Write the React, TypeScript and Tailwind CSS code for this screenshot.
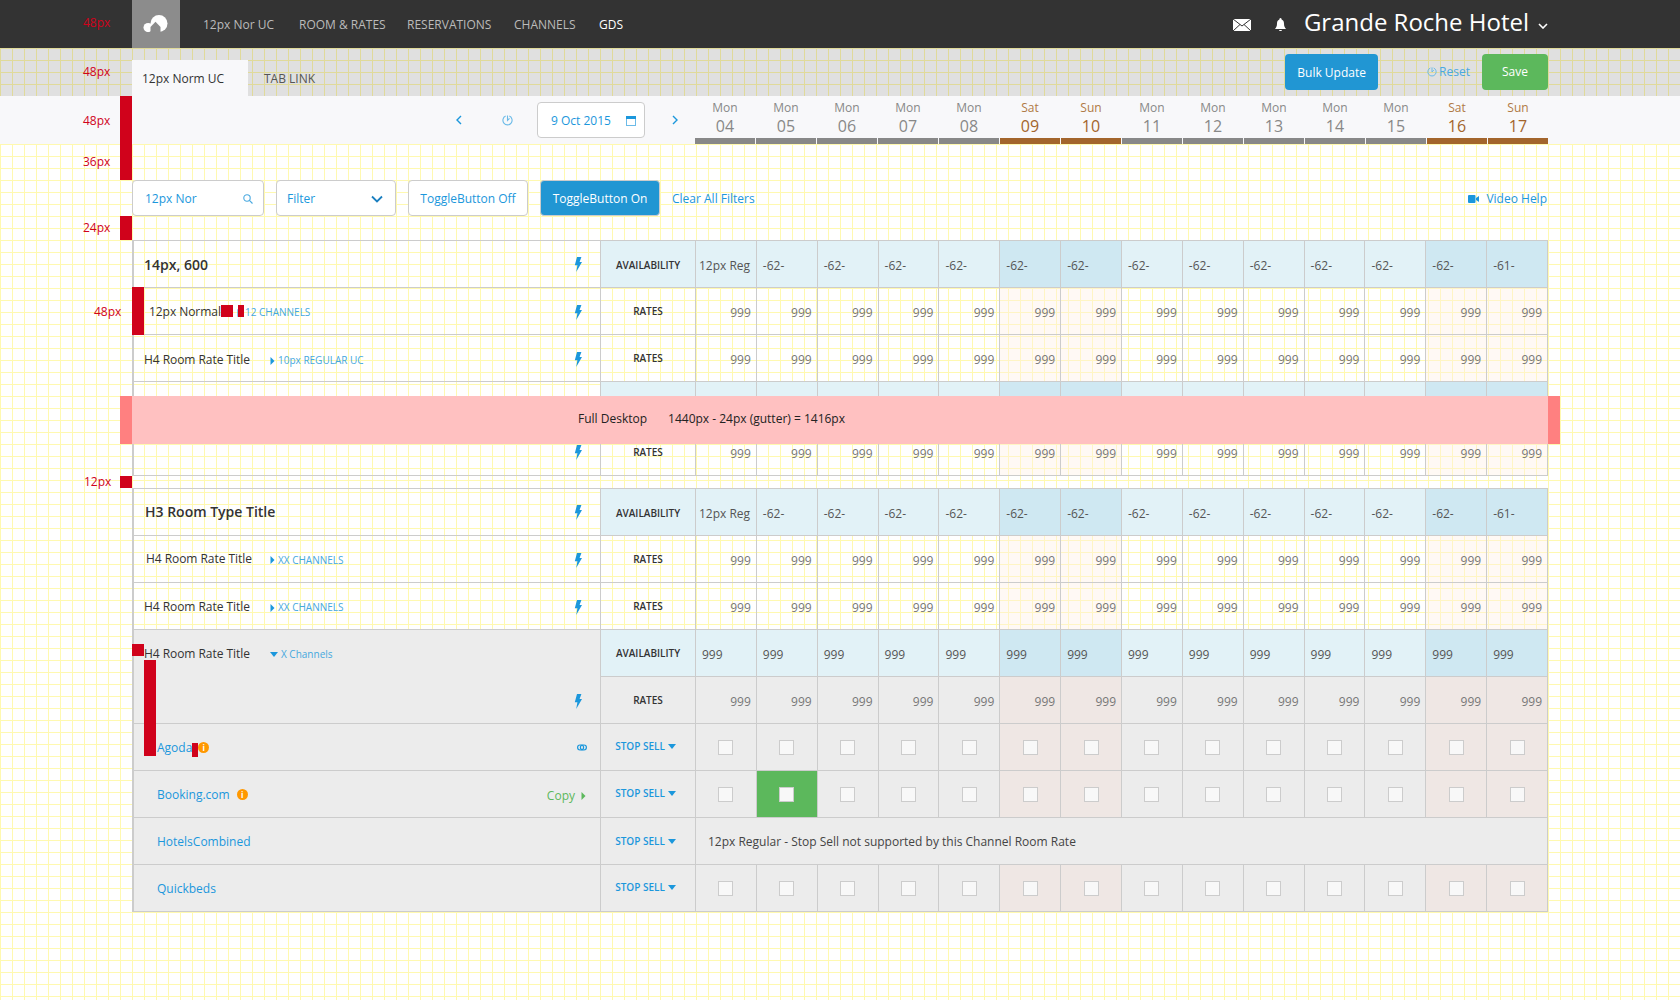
import React from 'react';

const DAYS = [
    ['Mon', '04'], ['Mon', '05'], ['Mon', '06'], ['Mon', '07'], ['Mon', '08'], ['Sat', '09'], ['Sun', '10'],
    ['Mon', '11'], ['Mon', '12'], ['Mon', '13'], ['Mon', '14'], ['Mon', '15'], ['Sat', '16'], ['Sun', '17'],
];
const isWeekend = (i: number) => i === 5 || i === 6 || i === 12 || i === 13;
const ROW = 'grid grid-cols-[467px_95px_repeat(14,minmax(0,1fr))] h-[47px]';
const CELL = 'border-t border-l border-[#ccc] flex items-center min-w-0';

function Bolt({ className = 'mt-[3px]' }: { className?: string }) {
    return (
        <svg width="8" height="15" viewBox="0 0 8 15" className={`shrink-0 ${className}`}>
            <path d="M3 0 L7.4 0 L5.6 5 L8 5 L2.2 15 L3.4 8.2 L0.8 8.2 Z" fill="#1b97dc" />
        </svg>
    );
}

function CaretRight({ color = '#1b97dc' }: { color?: string }) {
    return (
        <svg width="5" height="8" viewBox="0 0 4 8" className="shrink-0">
            <path d="M0 0 L4 4 L0 8 Z" fill={color} />
        </svg>
    );
}

function CaretDown({ w = 8, h = 5 }: { w?: number; h?: number }) {
    return (
        <svg width={w} height={h} viewBox="0 0 8 5" className="shrink-0">
            <path d="M0 0 L8 0 L4 5 Z" fill="#1b97dc" />
        </svg>
    );
}

function Info() {
    return (
        <span className="w-[11px] h-[11px] rounded-full bg-[#ff9800] text-white text-[8px] leading-[11px] text-center font-bold shrink-0">
            i
        </span>
    );
}

function Clock({ size = 11 }: { size?: number }) {
    return (
        <svg width={size} height={size} viewBox="0 0 12 12" fill="none" stroke="#6cbbe8" strokeWidth="1.2" className="shrink-0">
            <path d="M4 1.2 A5 5 0 1 0 8 1.2" />
            <path d="M6 0.5 L6 6 L8.2 3.8" />
        </svg>
    );
}

function AvailabilityRow({ title, values, left, label = 'AVAILABILITY' }: { title?: React.ReactNode; values: string[]; left?: boolean; label?: string }) {
    return (
        <div className={ROW}>
            <div className={`${CELL} justify-between pl-[10px] pr-[18px] ${left ? 'bg-[#ececec]' : ''}`}>{title}</div>
            <div className={`${CELL} justify-center ${left ? 'pt-px' : 'pt-[2px]'} bg-[#e2f2f7] text-[10px] font-semibold text-[#333]`}>
                {label}
            </div>
            {values.map((v, i) => (
                <div
                    key={i}
                    className={`${CELL} ${v === '12px Reg' ? 'pl-[3px]' : 'pl-[6px]'} pt-[3px] whitespace-nowrap text-[12px] text-[#555] ${
                        isWeekend(i) ? 'bg-[#cfe8f2]' : 'bg-[#e2f2f7]'
                    }`}
                >
                    {v}
                </div>
            ))}
        </div>
    );
}

function RatesRow({ title, grey, noTop }: { title?: React.ReactNode; grey?: boolean; noTop?: boolean }) {
    return (
        <div className={ROW}>
            <div
                className={`${CELL} justify-between pl-[10px] pr-[18px] ${noTop ? 'border-t-0' : ''} ${grey ? 'bg-[#ececec]' : ''}`}
            >
                {title}
            </div>
            <div className={`${CELL} justify-center text-[10px] font-semibold text-[#333] ${grey ? 'bg-[#ececec]' : ''}`}>RATES</div>
            {DAYS.map((_, i) => (
                <div
                    key={i}
                    className={`${CELL} justify-end pr-[5px] pt-[3px] text-[12px] text-[#777] ${
                        grey ? (isWeekend(i) ? 'bg-[#efe7e4]' : 'bg-[#ececec]') : isWeekend(i) ? 'bg-[#fff0e6]/40' : ''
                    }`}
                >
                    999
                </div>
            ))}
        </div>
    );
}

function Title({ text, children, className = '' }: { text: string; children?: React.ReactNode; className?: string }) {
    return (
        <div className={`flex items-center ${className}`}>
            <span className="text-[12px] tracking-[-0.05px] text-[#333] w-[126px] shrink-0">{text}</span>
            {children}
        </div>
    );
}

function Channels({ text, down }: { text: string; down?: boolean }) {
    return (
        <span className="flex items-center gap-[3px] text-[10px] text-[#45a8de] pt-[2px]">
            {down ? <CaretDown w={8} h={5} /> : <CaretRight />}
            {text}
        </span>
    );
}

function ChannelRow({
    name,
    right,
    info,
    infoGap,
    selected,
    message,
}: {
    name: string;
    right?: React.ReactNode;
    info?: boolean;
    infoGap?: string;
    selected?: number;
    message?: string;
}) {
    return (
        <div className={ROW}>
            <div className={`${CELL} justify-between pl-[23px] pr-[14px] bg-[#ececec]`}>
                <span className="flex items-center pt-px text-[12px] text-[#1b97dc]">
                    {name}
                    {info && <span className={`flex ${infoGap}`}><Info /></span>}
                </span>
                {right}
            </div>
            <div
                className={`${CELL} justify-center gap-[3px] pr-[5px] ${
                    message ? 'pt-px' : 'pb-[2px]'
                } bg-[#ececec] text-[10px] font-semibold text-[#1b97dc]`}
            >
                STOP SELL
                <CaretDown />
            </div>
            {message ? (
                <div className={`${CELL} col-span-14 pl-3 pt-[2px] bg-[#ececec] text-[12px] text-[#444]`}>{message}</div>
            ) : (
                DAYS.map((_, i) => (
                    <div
                        key={i}
                        className={`${CELL} justify-center ${
                            selected === i ? 'bg-[#5cb85c]' : isWeekend(i) ? 'bg-[#efe7e4]' : 'bg-[#ececec]'
                        }`}
                    >
                        <span className="w-[15px] h-[15px] bg-[#f8f8f8] border border-[#ccc]" />
                    </div>
                ))
            )}
        </div>
    );
}

function Marker({ className }: { className: string }) {
    return <div className={`absolute bg-[#d0021b] ${className}`} />;
}

function Note({ text, className }: { text: string; className: string }) {
    return <div className={`absolute text-[12px] leading-4 text-[#d0021b] ${className}`}>{text}</div>;
}

const NEGS = ['12px Reg', '-62-', '-62-', '-62-', '-62-', '-62-', '-62-', '-62-', '-62-', '-62-', '-62-', '-62-', '-62-', '-61-'];
const BLANKS = DAYS.map(() => '');

export default function App() {
    return (
        <div className="relative h-[1000px] overflow-hidden bg-white bg-[linear-gradient(to_right,#fff9b0_1px,transparent_1px),linear-gradient(to_bottom,#fff9b0_1px,transparent_1px)] bg-size-[12px_12px] font-['Open_Sans',sans-serif]">
            {/* top bar */}
            <header className="h-12 bg-[#333] flex items-center pl-[132px] pr-[132px]">
                <a className="w-12 h-12 bg-[#8c8c8c] flex items-center justify-center pr-px">
                    <svg width="25" height="18" viewBox="0 0 24 18">
                        <circle cx="4.6" cy="12.6" r="4.6" fill="#fff" />
                        <circle cx="15.5" cy="8.6" r="8.5" fill="#fff" />
                        <path d="M7 18 L7 12 L12 6.8 L17 12 L17 18 Z" fill="#8c8c8c" />
                        <rect x="0" y="17.2" width="24" height="1" fill="#8c8c8c" />
                    </svg>
                </a>
                <nav className="flex items-center pt-px text-[12px] text-[#bbb] ml-[23px]">
                    <a className="w-[96px]">12px Nor UC</a>
                    <a className="w-[108px]">ROOM &amp; RATES</a>
                    <a className="w-[107px]">RESERVATIONS</a>
                    <a className="w-[85px]">CHANNELS</a>
                    <a className="text-white">GDS</a>
                </nav>
                <div className="ml-auto flex items-center">
                    <svg width="18" height="12" viewBox="0 0 18 12" className="mt-[2px] -mr-[2px] -translate-x-[2px]">
                        <rect width="18" height="12" fill="#fff" />
                        <path d="M0 0 L9 7 L18 0 M0 12 L7 5.5 M18 12 L11 5.5" stroke="#333" strokeWidth="1" fill="none" />
                    </svg>
                    <svg width="11" height="14" viewBox="0 0 11 14" className="ml-[24px] mt-[2px]">
                        <path d="M5.5 0 C6.4 0 6.6 .8 6.6 1.4 C8.4 2 9 3.6 9 5.6 C9 8 9.6 9.6 11 11 L0 11 C1.4 9.6 2 8 2 5.6 C2 3.6 2.6 2 4.4 1.4 C4.4 .8 4.6 0 5.5 0 Z M4 12 L7 12 C7 13.4 4 13.4 4 12 Z" fill="#fff" />
                    </svg>
                    <span className="ml-[18px] -mt-[4px] text-[24px] leading-8 text-white">Grande Roche Hotel</span>
                    <svg width="10" height="6" viewBox="0 0 10 6" fill="none" stroke="#fff" strokeWidth="1.6" className="ml-[9px] mt-[3px]">
                        <path d="M1 1 L5 5 L9 1" />
                    </svg>
                </div>
            </header>

            {/* tabs + actions */}
            <div className="h-12 bg-black/12 flex items-end pl-[132px] pr-[132px]">
                <a className="w-[116px] h-9 bg-[#f8f8fa] flex items-center pl-[10px] pt-[2px] text-[12px] text-[#333]">12px Norm UC</a>
                <a className="h-9 flex items-center pl-[16px] pt-[2px] text-[12px] text-[#555]">TAB LINK</a>
                <div className="ml-auto self-start mt-[6px] flex items-center">
                    <button className="w-[93px] h-9 pt-px rounded-sm bg-[#2196d3] text-white text-[12px]">Bulk Update</button>
                    <a className="ml-[49px] flex items-center gap-[2px] text-[12px] text-[#4aa9e0]">
                        <Clock size={10} />
                        Reset
                    </a>
                    <button className="ml-[12px] w-[66px] h-9 rounded-sm bg-[#5cb85c] text-white text-[12px]">Save</button>
                </div>
            </div>

            {/* date strip */}
            <div className="h-12 bg-[#f8f8fa] flex pl-[132px] pr-[132px]">
                <div className="w-[563px] shrink-0 flex items-center pl-[324px]">
                    <svg width="6" height="10" viewBox="0 0 6 10" fill="none" stroke="#1b97dc" strokeWidth="1.4">
                        <path d="M5 1 L1 5 L5 9" />
                    </svg>
                    <span className="ml-[40px] flex"><Clock /></span>
                    <div className="ml-[24px] w-[108px] h-9 pt-px bg-white border border-[#ccc] rounded-sm flex items-center justify-between pl-[13px] pr-[8px] text-[12px] text-[#1b97dc]">
                        9 Oct 2015
                        <svg width="10" height="10" viewBox="0 0 10 10">
                            <rect x=".5" y=".5" width="9" height="9" fill="none" stroke="#6cbbe8" />
                            <rect width="10" height="3" fill="#1b97dc" />
                        </svg>
                    </div>
                    <svg width="6" height="10" viewBox="0 0 6 10" fill="none" stroke="#1b97dc" strokeWidth="1.4" className="ml-[27px]">
                        <path d="M1 1 L5 5 L1 9" />
                    </svg>
                </div>
                <div className="flex-1 grid grid-cols-[repeat(14,minmax(0,1fr))] gap-x-px">
                    {DAYS.map(([d, n], i) => (
                        <div key={i} className="flex flex-col items-center">
                            <span className={`text-[12px] leading-[14px] mt-[5px] ${isWeekend(i) ? 'text-[#b07a45]' : 'text-[#888]'}`}>{d}</span>
                            <span className={`text-[16px] leading-[20px] mt-[1px] ${isWeekend(i) ? 'text-[#a3652c]' : 'text-[#888]'}`}>{n}</span>
                            <span className={`mt-auto h-[6px] w-full ${isWeekend(i) ? 'bg-[#a3652c]' : 'bg-[#888]'}`} />
                        </div>
                    ))}
                </div>
            </div>

            {/* filters */}
            <div className="mt-9 mb-6 h-9 mx-[132px] flex items-center gap-3 text-[12px] text-[#1b97dc]">
                <div className="w-[132px] h-9 pt-px bg-white border border-[#ccc] rounded-sm flex items-center justify-between pl-3 pr-[10px]">
                    12px Nor
                    <svg width="10" height="10" viewBox="0 0 10 10" fill="none" stroke="#4aa9e0" strokeWidth="1.1">
                        <circle cx="4" cy="4" r="3.2" />
                        <path d="M6.4 6.4 L9.5 9.5" />
                    </svg>
                </div>
                <div className="w-[120px] h-9 pt-px bg-white border border-[#ccc] rounded-sm flex items-center justify-between pl-[10px] pr-[12px]">
                    Filter
                    <svg width="12" height="8" viewBox="0 0 12 8" fill="none" stroke="#1b7fc0" strokeWidth="1.8">
                        <path d="M1 1.5 L6 6.5 L11 1.5" />
                    </svg>
                </div>
                <button className="w-[120px] h-9 pt-px bg-white border border-[#ccc] rounded-sm">ToggleButton Off</button>
                <button className="w-[120px] h-9 pt-px bg-[#2196d3] border border-[#ccc] rounded-sm text-white">ToggleButton On</button>
                <a className="pt-px">Clear All Filters</a>
                <a className="ml-auto pt-px pr-px flex items-center gap-[7px]">
                    <svg width="11" height="8" viewBox="0 0 11 8">
                        <rect width="7.5" height="8" rx="1" fill="#1b97dc" />
                        <path d="M8 3 L11 1 L11 7 L8 5 Z" fill="#1b97dc" />
                    </svg>
                    Video Help
                </a>
            </div>

            {/* first room type */}
            <section className="mx-[132px] border-l border-r border-b border-[#ccc]">
                <AvailabilityRow
                    values={NEGS}
                    title={
                        <>
                            <span className="text-[14px] font-semibold text-[#333]">14px, 600</span>
                            <Bolt className="mt-px" />
                        </>
                    }
                />
                <RatesRow
                    title={
                        <>
                            <Title text="12px Normal" className="pl-[5px] pt-px">
                                <span className="-ml-[38px]"><Channels text="12 CHANNELS" /></span>
                            </Title>
                            <Bolt />
                        </>
                    }
                />
                <RatesRow
                    title={
                        <>
                            <Title text="H4 Room Rate Title" className="pt-[3px]">
                                <Channels text="10px REGULAR UC" />
                            </Title>
                            <Bolt />
                        </>
                    }
                />
                {/* this row sits under the pink width banner, its text can't be seen */}
                <AvailabilityRow values={BLANKS} label="" />
                <RatesRow title={<span className="ml-auto flex"><Bolt className="mt-px" /></span>} />
            </section>

            {/* second room type */}
            <section className="mt-3 mx-[132px] border-l border-r border-b border-[#ccc]">
                <AvailabilityRow
                    values={NEGS}
                    title={
                        <>
                            <span className="text-[14px] font-semibold text-[#333] pl-px -mt-px">H3 Room Type Title</span>
                            <Bolt className="mt-px" />
                        </>
                    }
                />
                <RatesRow
                    title={
                        <>
                            <Title text="H4 Room Rate Title" className="pl-[2px]">
                                <span className="-ml-[2px]"><Channels text="XX CHANNELS" /></span>
                            </Title>
                            <Bolt />
                        </>
                    }
                />
                <RatesRow
                    title={
                        <>
                            <Title text="H4 Room Rate Title" className="pt-px">
                                <Channels text="XX CHANNELS" />
                            </Title>
                            <Bolt />
                        </>
                    }
                />
                <AvailabilityRow
                    left
                    values={['999', '999', '999', '999', '999', '999', '999', '999', '999', '999', '999', '999', '999', '999']}
                    title={
                        <Title text="H4 Room Rate Title" className="pt-px">
                            <Channels down text="X Channels" />
                        </Title>
                    }
                />
                <RatesRow grey noTop title={<span className="ml-auto flex"><Bolt /></span>} />
                <ChannelRow
                    name="Agoda"
                    info
                    infoGap="ml-[6px]"
                    right={
                        <svg width="10" height="7" viewBox="0 0 10 7" fill="none" stroke="#1b97dc" strokeWidth="1.2" className="-mr-[1px]">
                            <rect x=".6" y="1" width="6" height="5" rx="2.4" />
                            <rect x="3.4" y="1" width="6" height="5" rx="2.4" />
                        </svg>
                    }
                />
                <ChannelRow
                    name="Booking.com"
                    info
                    infoGap="ml-[7px]"
                    selected={1}
                    right={
                        <span className="flex items-center gap-[6px] text-[12px] text-[#5cb85c] pt-[3px]">
                            Copy
                            <CaretRight color="#5cb85c" />
                        </span>
                    }
                />
                <ChannelRow name="HotelsCombined" message="12px Regular - Stop Sell not supported by this Channel Room Rate" />
                <ChannelRow name="Quickbeds" />
            </section>

            {/* spec annotations drawn over the page */}
            <div className="absolute left-[120px] top-[396px] w-[1440px] h-12 bg-[#ffc1c1] border-x-12 border-[#ff8080] flex items-center pb-[2px] text-[12px] text-[#222]">
                <span className="ml-[446px]">Full Desktop</span>
                <span className="ml-[21px]">1440px - 24px (gutter) = 1416px</span>
            </div>
            <Note text="48px" className="left-[83px] top-[15px] text-[#b80f22]" />
            <Note text="48px" className="left-[83px] top-[64px]" />
            <Note text="48px" className="left-[83px] top-[113px]" />
            <Note text="36px" className="left-[83px] top-[154px]" />
            <Note text="24px" className="left-[83px] top-[220px]" />
            <Note text="48px" className="left-[94px] top-[304px]" />
            <Note text="12px" className="left-[84px] top-[474px]" />
            <Marker className="left-[120px] top-[96px] w-3 h-[84px]" />
            <Marker className="left-[120px] top-[216px] w-3 h-6" />
            <Marker className="left-[132px] top-[287px] w-3 h-12" />
            <Marker className="left-[221px] top-[305px] w-3 h-3" />
            <Marker className="left-[238px] top-[305px] w-[6px] h-3" />
            <Marker className="left-[120px] top-[476px] w-3 h-3" />
            <Marker className="left-[132px] top-[644px] w-3 h-3" />
            <Marker className="left-[144px] top-[660px] w-3 h-24" />
            <Marker className="left-[192px] top-[743px] w-[6px] h-[14px]" />
        </div>
    );
}
